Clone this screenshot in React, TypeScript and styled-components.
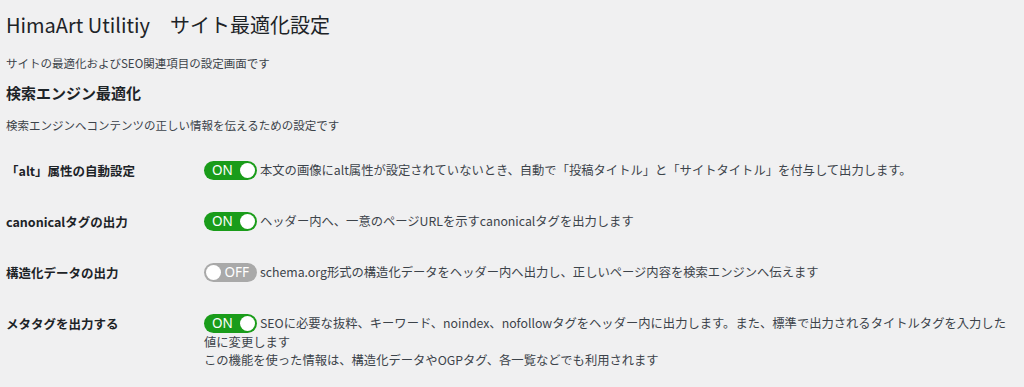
import styled, { createGlobalStyle } from 'styled-components'

const GlobalStyle = createGlobalStyle`
    html, body {
        margin: 0;
        padding: 0;
        background: #f0f0f1;
    }
    body {
        font-family: "Noto Sans CJK JP", "Noto Sans", sans-serif;
        color: #3c434a;
    }
`

const Wrap = styled.div`
    padding: 12px 12px 0 6px;
`
const Title = styled.h1`
    margin: 0;
    font-size: 20px;
    line-height: 26px;
    font-weight: 400;
    color: #1d2327;
`
const Lead = styled.p<{ $gap: number }>`
    margin: ${p => p.$gap}px 0 0;
    font-size: 11.5px;
    line-height: 18px;
`
const SectionTitle = styled.h2`
    margin: 11px 0 0;
    font-size: 15px;
    line-height: 20px;
    font-weight: 700;
    color: #1d2327;
`
const FormTable = styled.div`
    margin-top: 11px;
`
const Row = styled.div`
    display: grid;
    grid-template-columns: 198px 1fr;
    padding: 16px 0;
`
const Label = styled.div`
    font-size: 12.5px;
    font-weight: 700;
    line-height: 19px;
    color: #1d2327;
`
const Field = styled.div`
    font-size: 12.3px;
    line-height: 17.5px;
`
const Toggle = styled.span<{ $on: boolean }>`
    display: inline-flex;
    align-items: center;
    justify-content: ${p => (p.$on ? 'flex-start' : 'flex-end')};
    position: relative;
    box-sizing: border-box;
    width: 53px;
    height: 19px;
    margin-right: 3px;
    padding: ${p => (p.$on ? '0 0 0 8px' : '0 8px 0 0')};
    border-radius: 10px;
    background: ${p => (p.$on ? '#1a9c1a' : '#a9a9a9')};
    color: #fff;
    font-family: "Noto Sans", sans-serif;
    font-size: 13.5px;
    line-height: 19px;
    vertical-align: top;
    &::after {
        content: '';
        position: absolute;
        top: 2px;
        ${p => (p.$on ? 'right: 2px;' : 'left: 2px;')}
        width: 15px;
        height: 15px;
        border-radius: 50%;
        background: #fff;
    }
`
const Line = styled.span`
    vertical-align: top;
    line-height: 19px;
`
const NextLine = styled.span`
    display: block;
`

type Setting = {
    label: string
    on: boolean
    lines: string[]
}

const settings: Setting[] = [
    {
        label: '「alt」属性の自動設定',
        on: true,
        lines: ['本文の画像にalt属性が設定されていないとき、自動で「投稿タイトル」と「サイトタイトル」を付与して出力します。'],
    },
    {
        label: 'canonicalタグの出力',
        on: true,
        lines: ['ヘッダー内へ、一意のページURLを示すcanonicalタグを出力します'],
    },
    {
        label: '構造化データの出力',
        on: false,
        lines: ['schema.org形式の構造化データをヘッダー内へ出力し、正しいページ内容を検索エンジンへ伝えます'],
    },
    {
        label: 'メタタグを出力する',
        on: true,
        lines: [
            'SEOに必要な抜粋、キーワード、noindex、nofollowタグをヘッダー内に出力します。また、標準で出力されるタイトルタグを入力した値に変更します',
            'この機能を使った情報は、構造化データやOGPタグ、各一覧などでも利用されます',
        ],
    },
]

const App = () => {
    return (
        <>
            <GlobalStyle />
            <Wrap>
                <Title>HimaArt Utilitiy　サイト最適化設定</Title>
                <Lead $gap={16}>サイトの最適化およびSEO関連項目の設定画面です</Lead>
                <SectionTitle>検索エンジン最適化</SectionTitle>
                <Lead $gap={13}>検索エンジンへコンテンツの正しい情報を伝えるための設定です</Lead>
                <FormTable>
                    {settings.map(s => (
                        <Row key={s.label}>
                            <Label>{s.label}</Label>
                            <Field>
                                <Toggle $on={s.on}>{s.on ? 'ON' : 'OFF'}</Toggle>
                                <Line>{s.lines[0]}</Line>
                                {s.lines.slice(1).map((l, i) => (
                                    <NextLine key={i}>{l}</NextLine>
                                ))}
                            </Field>
                        </Row>
                    ))}
                </FormTable>
            </Wrap>
        </>
    )
}

export default App
